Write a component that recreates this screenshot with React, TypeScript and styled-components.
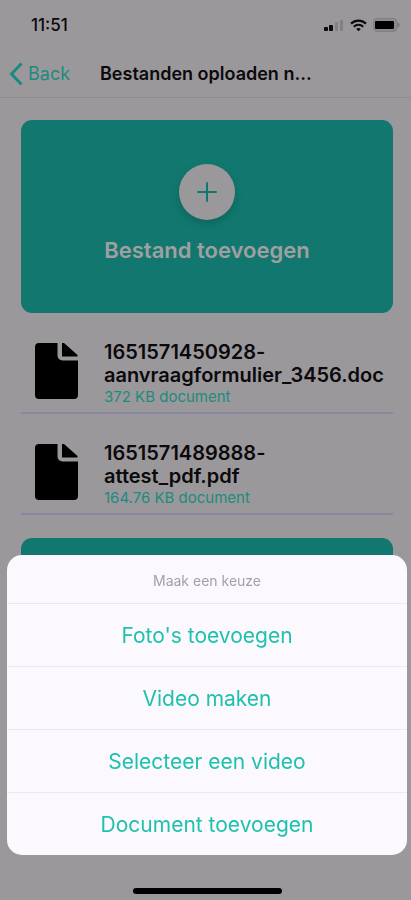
import React from "react";
import styled, { createGlobalStyle } from "styled-components";

const color = {
  page: "#9b989b",
  teal: "#12786f",
  link: "#1b8b7f",
  ink: "#0b090c",
  accent: "#1fc1ae",
  sheet: "#fbf9fd",
};

const GlobalStyle = createGlobalStyle`
  *, *::before, *::after { box-sizing: border-box; }
  html, body { margin: 0; background: ${color.page}; }
  body { font-family: Inter, "Liberation Sans", sans-serif; color: ${color.ink}; }
  button { font: inherit; border: 0; cursor: pointer; }
  h1, h2, p, ul { margin: 0; padding: 0; }
  ul { list-style: none; }
`;

const Screen = styled.div`
  height: 100vh;
  overflow: hidden;
  background: ${color.page};
`;

const StatusBar = styled.div`
  display: flex;
  align-items: center;
  justify-content: space-between;
  height: 50px;
  padding: 0 11px 0 31px;
`;

const Clock = styled.time`
  font-size: 17px;
  line-height: 20px;
  font-weight: 500;
`;

const StatusIcons = styled.div`
  display: flex;
  align-items: center;
  gap: 6px;

  svg { display: block; }
`;

const NavBar = styled.header`
  display: flex;
  align-items: center;
  height: 48px;
  padding: 0 8px;
  border-bottom: 1px solid #8f8c90;
`;

const BackLink = styled.a`
  display: flex;
  align-items: center;
  gap: 5px;
  width: 92px;
  color: ${color.link};
  font-size: 18px;
  line-height: 24px;
  text-decoration: none;
`;

const Title = styled.h1`
  font-size: 18px;
  line-height: 24px;
  font-weight: 600;
  white-space: nowrap;
`;

const Content = styled.main`
  padding: 22px 18px 0 21px;
`;

const AddCard = styled.button`
  display: flex;
  flex-direction: column;
  align-items: center;
  justify-content: center;
  gap: 16px;
  width: 100%;
  height: 193px;
  padding: 0 0 6px;
  border-radius: 11px;
  background: ${color.teal};
  color: #a09fa1;
  font-size: 22px;
  line-height: 28px;
  font-weight: 600;
`;

const PlusCircle = styled.span`
  display: grid;
  place-items: center;
  width: 56px;
  height: 56px;
  border-radius: 50%;
  background: ${color.page};
  box-shadow: 0 4px 8px rgba(0, 70, 60, 0.35);
`;

const FileList = styled.ul`
  && { padding: 0 0 23px; }
`;

const FileRow = styled.li`
  display: flex;
  align-items: center;
  gap: 26px;
  height: 101px;
  padding: 16px 8px 0 14px;
  border-bottom: 2px solid #8787a0;

  & > svg { flex: none; }
`;

const FileText = styled.div`
  padding-top: 6px;
`;

const FileName = styled.p`
  font-size: 20px;
  line-height: 23px;
  font-weight: 600;
`;

const FileMeta = styled.p`
  color: ${color.link};
  font-size: 15px;
  line-height: 20px;
`;

const Overlay = styled.div`
  position: fixed;
  inset: 0;
  display: flex;
  flex-direction: column;
  align-items: center;
  justify-content: flex-end;
  gap: 33px;
  padding: 0 4px 6px 7px;
`;

const Sheet = styled.section`
  width: 100%;
  border-radius: 15px;
  background: ${color.sheet};
  overflow: hidden;
`;

const SheetTitle = styled.h2`
  && { padding: 16px 0 12px; }
  color: #a3a1a6;
  font-size: 14px;
  line-height: 20px;
  font-weight: 400;
  text-align: center;
`;

const SheetAction = styled.button`
  && { border-top: 1px solid #ebe9ed; }
  display: block;
  width: 100%;
  height: 63px;
  padding: 2px 0 0;
  background: transparent;
  color: ${color.accent};
  font-size: 21px;
  line-height: 28px;
  font-weight: 400;
`;

const HomeIndicator = styled.div`
  width: 149px;
  height: 6px;
  border-radius: 3px;
  background: #000;
`;

const SignalIcon = () => (
  <svg width="20" height="13" viewBox="0 0 20 13" aria-hidden="true">
    <rect x="0" y="8" width="4" height="4" rx="1" fill="#0b090c" />
    <rect x="5" y="6" width="4" height="6" rx="1" fill="#0b090c" />
    <rect x="11" y="3" width="3" height="9" rx="1" fill="#838084" />
    <rect x="16" y="1" width="3" height="11" rx="1" fill="#838084" />
  </svg>
);

const WifiIcon = () => (
  <svg width="17" height="13" viewBox="0 0 17 13" fill="none" stroke="#0b090c" aria-hidden="true">
    <path d="M1 4.6a10.8 10.8 0 0 1 15 0" strokeWidth="2.2" />
    <path d="M3.8 7.7a6.8 6.8 0 0 1 9.4 0" strokeWidth="2" />
    <path d="M8.5 12.3 6.2 10a3.3 3.3 0 0 1 4.6 0Z" fill="#0b090c" stroke="none" />
  </svg>
);

const BatteryIcon = () => (
  <svg width="27" height="14" viewBox="0 0 27 14" aria-hidden="true">
    <rect x="0.7" y="0.7" width="22.6" height="12.6" rx="3" fill="#8f8c90" stroke="#838084" strokeWidth="1.2" />
    <rect x="2" y="3" width="19" height="8" rx="1" fill="#000" />
    <path d="M24.3 3.5 27 7l-2.7 3.5Z" fill="#79767a" />
  </svg>
);

const ChevronIcon = () => (
  <svg width="15" height="24" viewBox="0 0 15 24" fill="none" aria-hidden="true">
    <path d="M13.5 1.5 3.5 12l10 10.5" stroke={color.link} strokeWidth="3" />
  </svg>
);

const PlusIcon = () => (
  <svg width="20" height="20" viewBox="0 0 20 20" aria-hidden="true">
    <path d="M10 1v18M1 10h18" stroke={color.teal} strokeWidth="2" strokeLinecap="round" />
  </svg>
);

const FileIcon = () => (
  <svg width="43" height="56" viewBox="0 0 43 56" fill="#000" aria-hidden="true">
    <path d="M4 0h18.5v12.5a5 5 0 0 0 5 5H43V52a4 4 0 0 1-4 4H4a4 4 0 0 1-4-4V4a4 4 0 0 1 4-4Z" />
    <path d="M27 0h2L42.5 12v1.5H27Z" />
  </svg>
);

const files = [
  { name: "1651571450928-aanvraagformulier_3456.doc", meta: "372 KB document" },
  { name: "1651571489888-attest_pdf.pdf", meta: "164.76 KB document" },
];

const actions = ["Foto's toevoegen", "Video maken", "Selecteer een video", "Document toevoegen"];

export default function App() {
  return (
    <Screen>
      <GlobalStyle />
      <StatusBar>
        <Clock>11:51</Clock>
        <StatusIcons>
          <SignalIcon />
          <WifiIcon />
          <BatteryIcon />
        </StatusIcons>
      </StatusBar>
      <NavBar>
        <BackLink href="#back">
          <ChevronIcon />
          Back
        </BackLink>
        <Title>Bestanden oploaden n...</Title>
      </NavBar>
      <Content>
        <AddCard type="button">
          <PlusCircle>
            <PlusIcon />
          </PlusCircle>
          Bestand toevoegen
        </AddCard>
        <FileList>
          {files.map((file) => (
            <FileRow key={file.name}>
              <FileIcon />
              <FileText>
                <FileName>{file.name}</FileName>
                <FileMeta>{file.meta}</FileMeta>
              </FileText>
            </FileRow>
          ))}
        </FileList>
        <AddCard type="button" />
      </Content>
      <Overlay>
        <Sheet role="dialog" aria-labelledby="sheet-title">
          <SheetTitle id="sheet-title">Maak een keuze</SheetTitle>
          {actions.map((label) => (
            <SheetAction key={label} type="button">
              {label}
            </SheetAction>
          ))}
        </Sheet>
        <HomeIndicator />
      </Overlay>
    </Screen>
  );
}
